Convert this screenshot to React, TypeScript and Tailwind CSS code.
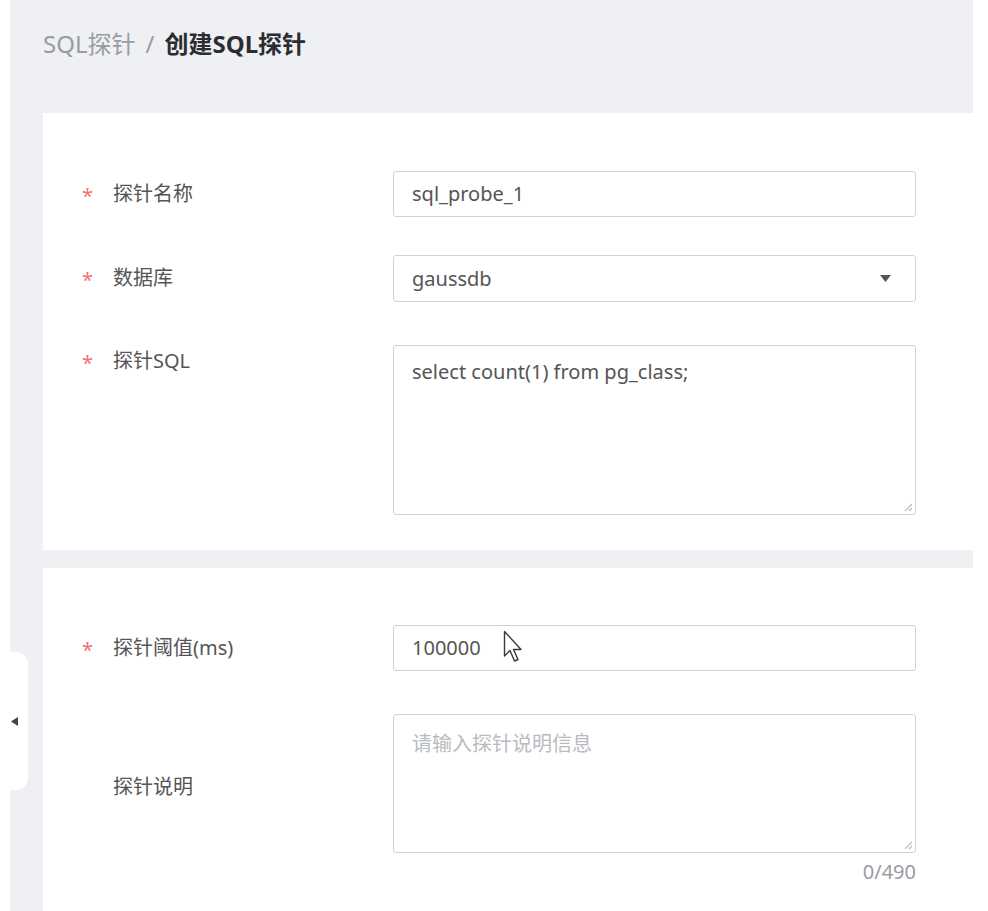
const font = "font-['Noto_Sans','Noto_Sans_CJK_SC',sans-serif]";

const Label = ({ text, required, tall }: { text: string; required?: boolean; tall?: boolean }) => (
    <div className={`w-[350px] shrink-0 flex items-center pl-[39px] ${tall ? 'h-[32px]' : 'h-[46px]'}`}>
        <span className="w-[31px] text-[#f27070] text-[20px] leading-none pt-[4px]">{required ? '*' : ''}</span>
        <span className="text-[20px] text-[#555]">{text}</span>
    </div>
)

const Resize = () => (
    <svg className="absolute right-[2px] bottom-[2px]" width="10" height="10" viewBox="0 0 10 10">
        <path d="M9 2 L2 9 M9 6 L6 9" stroke="#b8bcc4" strokeWidth="1.2" />
    </svg>
)

const App = () => {
    return (
        <div className={`relative w-[988px] h-[911px] overflow-hidden bg-white ${font}`}>
            <div className="ml-[10px] w-[963px] h-full bg-[#eef0f4] flex flex-col">
                <div className="h-[113px] pl-[33px] pt-[26px] text-[24px]">
                    <span className="text-[#9a9ca2]">SQL探针</span>
                    <span className="text-[#9a9ca2] mx-[10px]">/</span>
                    <span className="text-[#2b2d31] font-bold">创建SQL探针</span>
                </div>

                <div className="ml-[33px] bg-white h-[437px] pt-[58px]">
                    <div className="flex">
                        <Label text="探针名称" required />
                        <div className="w-[523px] h-[46px] border border-[#cfd2d8] rounded-[3px] flex items-center pl-[18px] text-[20px] text-[#555]">sql_probe_1</div>
                    </div>
                    <div className="flex mt-[38px]">
                        <Label text="数据库" required />
                        <div className="w-[523px] h-[47px] border border-[#cfd2d8] rounded-[3px] flex items-center justify-between pl-[18px] pr-[24px] text-[20px] text-[#555]">
                            <span>gaussdb</span>
                            <svg width="11" height="7" viewBox="0 0 11 7"><path d="M0 0 H11 L5.5 7 Z" fill="#555" /></svg>
                        </div>
                    </div>
                    <div className="flex items-start mt-[43px]">
                        <Label text="探针SQL" required tall />
                        <div className="relative w-[523px] h-[170px] border border-[#cfd2d8] rounded-[3px] pl-[18px] pt-[11px] text-[20px] text-[#555]">
                            select count(1) from pg_class;
                            <Resize />
                        </div>
                    </div>
                </div>

                <div className="ml-[33px] mt-[18px] bg-white flex-1 pt-[57px]">
                    <div className="flex">
                        <Label text="探针阈值(ms)" required />
                        <div className="relative w-[523px] h-[46px] border border-[#cfd2d8] rounded-[3px] flex items-center pl-[18px] text-[20px] text-[#555]">
                            100000
                            <svg className="absolute left-[109px] top-[4px]" width="22" height="34" viewBox="0 0 22 34">
                                <path d="M1.5 1.5 V26 L7 20.5 L11.5 31 L15 29.5 L10.5 19.5 H18 Z" fill="#fff" stroke="#3a3a3a" strokeWidth="1.4" strokeLinejoin="round" />
                            </svg>
                        </div>
                    </div>
                    <div className="flex items-start mt-[43px]">
                        <div className="pt-[50px]">
                            <Label text="探针说明" />
                        </div>
                        <div className="flex flex-col items-end">
                            <div className="relative w-[523px] h-[139px] border border-[#cfd2d8] rounded-[3px] pl-[18px] pt-[14px] text-[20px] text-[#b9bbbf]">
                                请输入探针说明信息
                                <Resize />
                            </div>
                            <div className="mt-[4px] text-[20px] text-[#9a9ca2]">0/490</div>
                        </div>
                    </div>
                </div>
            </div>

            <div className="absolute left-0 top-[652px] w-[28px] h-[138px] bg-white rounded-r-[12px] flex items-center justify-center">
                <svg width="7" height="9" viewBox="0 0 7 9"><path d="M7 0 V9 L0 4.5 Z" fill="#444" /></svg>
            </div>
        </div>
    )
}
export default App;
